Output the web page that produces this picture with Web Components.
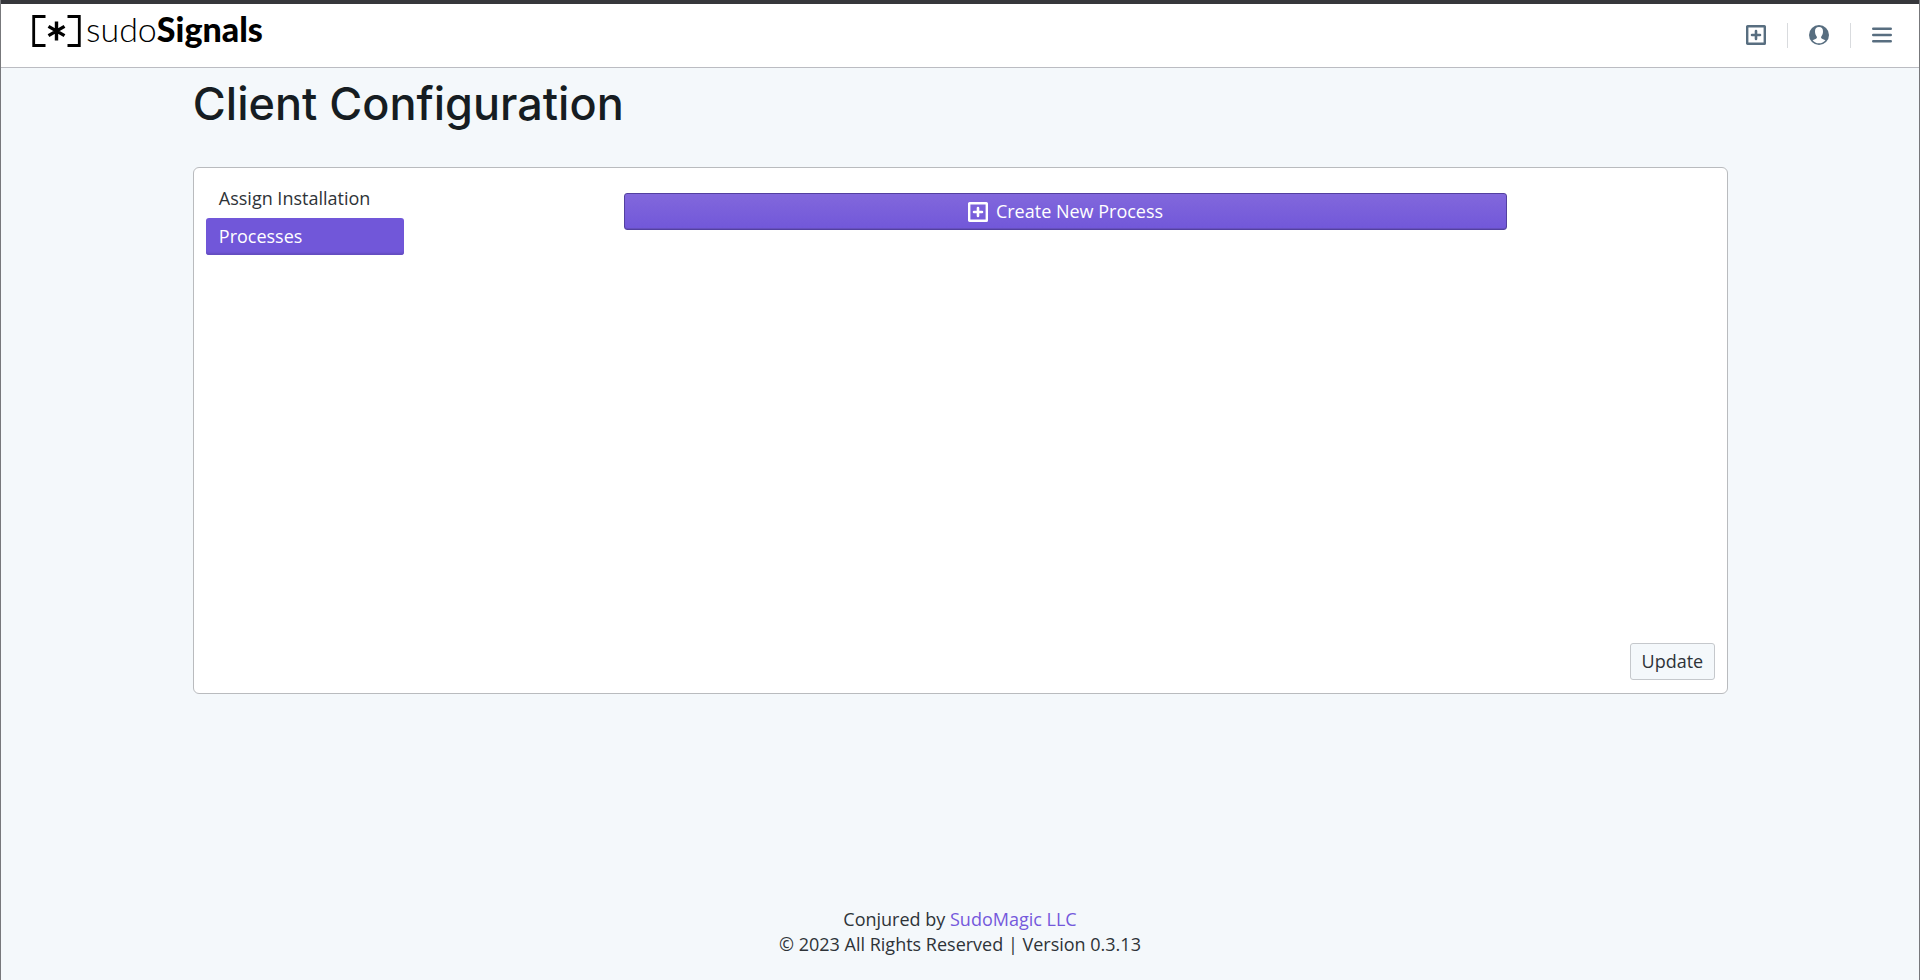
<!DOCTYPE html>
<html lang="en">
<head>
<meta charset="utf-8">
<title>sudoSignals – Client Configuration</title>
<style>
  html { height: 100%; }
  body {
    margin: 0;
    min-height: 100%;
    display: flex;
    box-sizing: border-box;
    border: solid #77787b;
    border-width: 0 1px;
    background: #f4f8fb;
    color: #2e3338;
    font: 18px/25px "Open Sans", "Noto Sans", sans-serif;
  }
</style>
</head>
<body>
<signals-app></signals-app>
<script>
const define = (name, html) => {
  const template = document.createElement('template');
  template.innerHTML = html;
  customElements.define(name, class extends HTMLElement {
    constructor() {
      super();
      this.attachShadow({ mode: 'open' }).append(template.content.cloneNode(true));
    }
  });
};

define('icon-plus-box', `
<style>
  :host { display: block; width: 20px; height: 20px; }
  svg { display: block; width: 100%; height: 100%; }
</style>
<svg viewBox="0 0 20 20" fill="none" stroke="currentColor" aria-hidden="true">
  <rect x="1.200" y="1.200" width="17.600" height="17.600" rx=".4" stroke-width="2.400"/>
  <path d="M10 6v8M6 10h8" stroke-width="2.600" stroke-linecap="round"/>
</svg>`);

define('icon-user', `
<style>
  :host { display: block; width: 20px; height: 20px; }
  svg { display: block; width: 100%; height: 100%; }
</style>
<svg viewBox="0 0 20 20" aria-hidden="true">
  <circle cx="10" cy="10" r="10" fill="currentColor"/>
  <path d="M10 2C7.200 2 5.800 4 6 6.800c.1 2.200.8 3.700 1.700 4.700.5 1 .2 1.800-.7 2.200l-3.400 1.500C5.200 17.200 7.400 18.300 10 18.300s4.800-1.100 6.400-3.100L13 13.700c-.9-.4-1.200-1.200-.7-2.200.9-1 1.600-2.500 1.700-4.700C14.200 4 12.800 2 10 2z" fill="#fff"/>
</svg>`);

define('icon-menu', `
<style>
  :host { display: block; width: 20px; height: 20px; }
  svg { display: block; width: 100%; height: 100%; }
</style>
<svg viewBox="0 0 20 20" stroke="currentColor" stroke-width="2.400" stroke-linecap="round" aria-hidden="true">
  <path d="M1.200 3.800h17.600M1.200 10h17.600M1.200 16.200h17.600"/>
</svg>`);

define('brand-logo', `
<style>
  :host { display: block; }
  a { display: flex; align-items: center; gap: 5px; color: #000; text-decoration: none; font: 300 34px/36px Lato, sans-serif; }
  svg { display: block; width: 49px; height: 32px; }
  span { padding-bottom: 4px; }
  b { font-weight: 900; }
</style>
<a href="#" aria-label="sudoSignals home">
  <svg viewBox="0 0 49 32" fill="none" stroke="#000" aria-hidden="true">
    <path d="M13.500 1.500H1.700v29h11.800M35.500 1.500h11.800v29h-11.800" stroke-width="2.800"/>
    <path d="M24.500 6.500v19M16.500 11.400l16 9.200M32.500 11.400l-16 9.200" stroke-width="3.400"/>
  </svg>
  <span>sudo<b>Signals</b></span>
</a>`);

define('app-header', `
<style>
  :host { display: block; border-top: 4px solid #36373b; border-bottom: 1px solid #bbbcc2; background: #fff; color: #586e80; }
  header { display: flex; align-items: center; justify-content: space-between; box-sizing: border-box; height: 63px; padding: 0 16px 1px 31px; }
  brand-logo { padding-bottom: 8px; }
  nav { display: flex; align-items: center; }
  button { display: block; padding: 3px 11px; border: 0; background: none; color: inherit; }
  i { width: 1px; height: 25px; margin: 0 10px; background: #d9dbde; }
</style>
<header>
  <brand-logo></brand-logo>
  <nav aria-label="Main">
    <button type="button" aria-label="Add"><icon-plus-box></icon-plus-box></button>
    <i></i>
    <button type="button" aria-label="Account"><icon-user></icon-user></button>
    <i></i>
    <button type="button" aria-label="Menu"><icon-menu></icon-menu></button>
  </nav>
</header>`);

define('side-tab', `
<style>
  :host { display: block; }
  button { display: block; width: 100%; height: 37px; padding: 0 13px; border: 0; border-radius: 3px; background: none; color: inherit; font: inherit; text-align: left; }
  :host([active]) button { background: #7157d9; color: #fff; box-shadow: inset 0 -3px 2px -1px #644dc0; }
</style>
<button type="button"><slot></slot></button>`);

define('primary-button', `
<style>
  :host { display: block; }
  button { display: flex; align-items: center; justify-content: center; gap: 8px; box-sizing: border-box; width: 100%; height: 37px; border: 1px solid #5340a0; border-radius: 3px; background: linear-gradient(#8268dc, #7157d9); color: #fff; font: inherit; box-shadow: inset 0 -1px #6650bd; }
</style>
<button type="button"><icon-plus-box></icon-plus-box><slot></slot></button>`);

define('plain-button', `
<style>
  :host { display: block; }
  button { display: block; box-sizing: border-box; height: 37px; padding: 0 11px; border: 1px solid #c5c8cc; border-radius: 3px; background: #f4f8fb; color: inherit; font: inherit; }
</style>
<button type="button"><slot></slot></button>`);

define('config-panel', `
<style>
  :host { display: flex; gap: 12px; box-sizing: border-box; min-height: 527px; padding: 12px 12px 13px; border: 1px solid #b9bbbe; border-radius: 6px; background: #fff; }
  nav { display: flex; flex-direction: column; gap: 1px; width: 198px; }
  section { display: flex; flex: 1; flex-direction: column; justify-content: space-between; align-items: center; padding-top: 13px; }
  primary-button { width: 68%; }
  plain-button { align-self: flex-end; }
</style>
<nav aria-label="Configuration"><slot name="tabs"></slot></nav>
<section><slot></slot><primary-button>Create New Process</primary-button><plain-button>Update</plain-button></section>`);

define('app-footer', `
<style>
  :host { display: block; text-align: center; }
  p { margin: 0; }
  a { color: #7459dc; text-decoration: none; }
</style>
<footer>
  <p>Conjured by <a href="#">SudoMagic LLC</a></p>
  <p>© 2023 All Rights Reserved | Version 0.3.13</p>
</footer>`);

define('signals-app', `
<style>
  :host { display: flex; flex: 1; flex-direction: column; min-width: 0; }
  main { margin: 0 calc(10% - 1px) 0 10%; }
  h1 { margin: 10px 0 37px; color: #161d22; font: 500 45px/52px Inter, sans-serif; }
  app-footer { margin-top: auto; padding: 24px 0 23px; }
</style>
<app-header></app-header>
<main>
  <h1>Client Configuration</h1>
  <config-panel>
    <side-tab slot="tabs">Assign Installation</side-tab>
    <side-tab slot="tabs" active>Processes</side-tab>
  </config-panel>
</main>
<app-footer></app-footer>`);
</script>
</body>
</html>
